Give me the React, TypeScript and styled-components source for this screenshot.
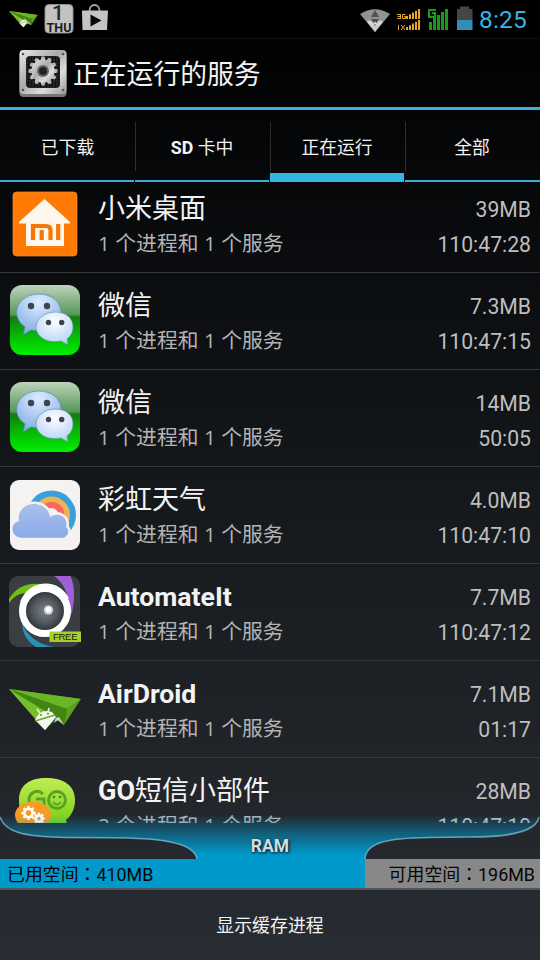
import React from 'react';
import styled, { createGlobalStyle } from 'styled-components';

const GlobalStyle = createGlobalStyle`
  * { box-sizing: border-box; }
  body {
    margin: 0;
    background: #000;
    font-family: Roboto, "Noto Sans CJK SC", sans-serif;
  }
  svg { display: block; flex: none; }
`;

const Screen = styled.div`
  width: 540px;
  height: 960px;
  overflow: hidden;
  display: flex;
  flex-direction: column;
  background: linear-gradient(#000 0%, #050608 15%, #15191c 52%, #22262b 82%, #282c33 100%);
  color: #f3f3f3;
`;

const StatusBar = styled.div`
  height: 39px;
  flex: none;
  display: flex;
  justify-content: space-between;
  background: #000;
  border-bottom: 1px solid #0e0e0e;
`;

const StatusRight = styled.div`
  display: flex;
`;

const Clock = styled.span`
  width: 61px;
  font-size: 24.5px;
  letter-spacing: 0.2px;
  line-height: 40px;
  color: #33b5e5;
  white-space: nowrap;
`;

const Header = styled.header`
  height: 71px;
  flex: none;
  display: flex;
  align-items: center;
  padding: 0 0 0 18px;
  gap: 5px;
  border-bottom: 3px solid #40acd9;
`;

const Title = styled.h1`
  margin: 0;
  font-size: 26.8px;
  font-weight: 400;
  line-height: 40px;
  padding-top: 3px;
`;

const Tabs = styled.nav`
  height: 72px;
  flex: none;
  display: grid;
  grid-template-columns: repeat(4, 135px);
`;

const Tab = styled.div<{ $active?: boolean }>`
  display: flex;
  flex-direction: column;
  align-items: stretch;
  text-align: center;
  font-size: 17.8px;
  &::after {
    content: '';
    margin-right: 1px;
    height: ${(p) => (p.$active ? 9 : 2)}px;
    background: ${(p) => (p.$active ? '#33b5e5' : '#45a8d2')};
  }
  &:last-child::after { margin-right: 0; }
`;

const TabLabel = styled.span<{ $active?: boolean }>`
  height: 49px;
  margin: 12px 0 ${(p) => (p.$active ? 2 : 9)}px;
  line-height: 51px;
  white-space: pre;
  ${Tab} + ${Tab} > & {
    border-left: 1px solid #2c2e30;
    padding-right: 2px;
  }
`;

const Strong = styled.b`
  font-weight: 700;
`;

const List = styled.div`
  height: 641px;
  flex: none;
  overflow: hidden;
`;

const ListBody = styled.div`
  margin-top: -6px;
`;

const Row = styled.div`
  height: 97px;
  display: flex;
  padding: 0 9px 0 9px;
  border-bottom: 1px solid #35383b;
`;

const IconSlot = styled.div`
  width: 72px;
  margin: 12px 17px 0 0;
`;

const Names = styled.div`
  flex: 1;
  display: flex;
  flex-direction: column;
  white-space: pre;
`;

const AppName = styled.div<{ $latin?: boolean }>`
  height: 36px;
  margin-top: 14px;
  font-size: ${(p) => (p.$latin ? 26.6 : 27)}px;
  font-weight: ${(p) => (p.$latin ? 700 : 400)};
  line-height: 38px;
`;

const Detail = styled.div`
  height: 30px;
  margin-top: 2px;
  font-family: "Open Sans", "Noto Sans CJK SC", sans-serif;
  font-size: 20.8px;
  font-weight: 400;
  line-height: 30px;
  color: #b4b4b4;
`;

const Stats = styled.div`
  display: flex;
  flex-direction: column;
  align-items: flex-end;
  padding-top: 16px;
  font-size: 21.2px;
  line-height: 35px;
  color: #bebebe;
`;

const RamPanel = styled.div`
  position: relative;
  z-index: 1;
  height: 67px;
  flex: none;
  display: flex;
  flex-direction: column;
  justify-content: flex-end;
  border-bottom: 2px solid #505458;
`;

const RamShape = styled.svg`
  position: absolute;
  left: 0;
  bottom: 29px;
  z-index: -1;
`;

const RamLabel = styled.div`
  height: 36px;
  line-height: 19px;
  padding-top: 14px;
  text-align: center;
  font-size: 17.5px;
  font-weight: 700;
  color: #d5dadd;
  text-shadow: 1px 1px 3px #000;
`;

const RamBar = styled.div`
  height: 29px;
  display: grid;
  grid-template-columns: 365px 175px;
  grid-template-rows: 29px;
  font-family: Roboto, "Noto Sans CJK TC", sans-serif;
  font-size: 17.9px;
  line-height: 31px;
  color: #050505;
`;

const Used = styled.div`
  background: #0099cc;
  padding-left: 7px;
`;

const Free = styled.div`
  background: #888;
  padding-right: 5px;
  text-align: right;
`;

const FooterButton = styled.div`
  height: 70px;
  text-align: center;
  font-size: 17.9px;
  line-height: 71px;
`;

function PlaneShape() {
  return (
    <>
      <path d="M0 16 72 26 58 37 55 52 47 46 36 57Z" fill="#4d9015" />
      <path d="M0 16 72 26 58 36Z" fill="#6cb626" />
      <path d="M0 16 58 36 55 52Z" fill="#438413" />
      <path d="M58 36 72 26 55 52Z" fill="#5a9f1d" />
      <path d="M0 16 46 44 36 57Z" fill="#74c02a" />
      <path d="M26 47Q31 35 43 39L47 44 36 57Z" fill="#f2f6ef" />
      <path d="m27 47 18-4M28 36l3 4M40 35l-1 4" stroke="#f2f6ef" strokeWidth="1.6" />
      <path d="m26 48 20-6" stroke="#68ae25" strokeWidth="1.4" />
      <circle cx="32" cy="42" r="1" fill="#599e20" />
      <circle cx="39" cy="40.5" r="1" fill="#599e20" />
      <path d="m47 45 3-1 5 8-6-5-4 3Z" fill="#cbd0d9" />
    </>
  );
}

function NotificationIcons() {
  return (
    <svg width="120" height="38">
      <g transform="translate(9 4.500) scale(.4)"><PlaneShape /></g>
      <rect x="45" y="4.500" width="28" height="28.500" rx="4" fill="#c2c2c2" stroke="#8e8e8e" />
      <text x="58" y="20" textAnchor="middle" fontFamily="Roboto" fontSize="21" fontWeight="500" fill="#262626">1</text>
      <text x="59" y="32" textAnchor="middle" fontFamily="Roboto" fontSize="12.500" fontWeight="700" fill="#1a1a1a" textLength="25">THU</text>
      <path d="M82 10.500h26L107 30H82.500Z" fill="#c4c4c4" />
      <path d="M89.500 11c0-8 10-8 10 0" fill="none" stroke="#aaa" strokeWidth="1.800" />
      <path d="m90.500 14.500 11 6-11 6Z" fill="#080808" />
    </svg>
  );
}

function SignalIcons() {
  return (
    <svg width="119" height="38">
      <path d="M0 14Q15 4.500 30 14L15 32Z" fill="#929292" />
      <path d="M7 22q8-4 16 0L15 32Z" fill="#c9c9c9" />
      <path d="m15 10 4 7h-8ZM11 19h8l-4 7Z" fill="#505050" />
      <path d="m8 21 4 4 3-2 3 2 4-4" fill="none" stroke="#d5d5d5" strokeWidth="2" />
      <g fill="none" stroke="#e9a528" strokeWidth="1">
        <path d="M37 14.500h3.500v4H38h2.500M37 18.500h3.500M40.500 14v4.500M37.500 16.500h3M45.500 14.500H42.500v4h3v-2h-1.500M38.500 25v5M41 25l4 5M45 25l-4 5" />
      </g>
      <g fill="#e9a528">
        {[0, 1, 2, 3, 4].map((i) => (
          <React.Fragment key={i}>
            <rect x={46 + i * 3} y={16 - i * 1.75} width="2" height={3 + i * 1.75} />
            <rect x={46 + i * 3} y={27 - i * 1.75} width="2" height={3 + i * 1.75} />
          </React.Fragment>
        ))}
      </g>
      <g fill="#179b1b">
        {[0, 1, 2, 3, 4].map((i) => (
          <rect key={i} x={69 + i * 4} y={[22, 18, 15, 12, 9][i]} width="3" height={[8, 12, 15, 18, 21][i]} />
        ))}
        <path d="M68 9h8v2h-6v5h4v-2h-2v-2h4v6h-8Z" />
      </g>
      <path d="M97 9h3V6.500h9V9h3.500v11H97Z" fill="#464646" />
      <rect x="97" y="20" width="15.500" height="10" fill="#338eb6" />
    </svg>
  );
}

const GEAR_TEETH = Array.from({ length: 12 }, (_, i) => i * 30);

function SettingsIcon() {
  return (
    <svg width="50" height="50">
      <defs>
        <linearGradient id="metal" x1="0" y1="0" x2="1" y2="1">
          <stop stopColor="#e8e8e8" /><stop offset=".45" stopColor="#aaa" /><stop offset=".7" stopColor="#ddd" /><stop offset="1" stopColor="#9a9a9a" />
        </linearGradient>
        <pattern id="mesh" width="3" height="3" patternUnits="userSpaceOnUse">
          <rect width="3" height="3" fill="#262626" /><circle cx="1.500" cy="1.500" r=".9" fill="#050505" />
        </pattern>
      </defs>
      <rect x="1.500" y="3" width="47" height="46" rx="4" fill="#777" />
      <rect x="1.500" y="2" width="47" height="44" rx="4" fill="url(#metal)" />
      <rect x="8" y="8" width="34" height="32" rx="4" fill="url(#mesh)" />
      {[5, 45].map((x) => [6, 42].map((y) => <circle key={`${x}-${y}`} cx={x} cy={y} r="1.300" fill="#555" />))}
      <g fill="url(#metal)">
        {GEAR_TEETH.map((a) => <path key={a} d="m22.500 13 1-4.500h3l1 4.500Z" transform={`rotate(${a} 25 23)`} />)}
        <circle cx="25" cy="23" r="11.500" />
      </g>
      <circle cx="25" cy="23" r="6" fill="#666" />
      <circle cx="25" cy="23" r="4" fill="#222" />
    </svg>
  );
}

function MiIcon() {
  return (
    <svg width="72" height="72">
      <rect x="4" y="4" width="64" height="64" rx="3.500" fill="#ff7a05" stroke="#f09040" strokeWidth=".7" />
      <path d="M35.500 11 61 34v1.500h-6V58H17V35.500h-7V34Z" fill="#fff6ec" />
      <g fill="none" stroke="#f57708" strokeWidth="4.200">
        <path d="M24 52V38h13q4.500 0 4.500 4V52M32.700 42v10M49.200 36V52" />
      </g>
    </svg>
  );
}

function WeChatIcon() {
  return (
    <svg width="72" height="72">
      <defs>
        <linearGradient id="wg" x1="0" y1="0" x2="0" y2="1">
          <stop stopColor="#bcd4bc" /><stop offset=".42" stopColor="#589758" /><stop offset=".46" stopColor="#147b14" /><stop offset=".7" stopColor="#06b506" /><stop offset="1" stopColor="#00f000" />
        </linearGradient>
        <radialGradient id="b1" cx=".5" cy=".2" r=".8"><stop stopColor="#dcecff" /><stop offset="1" stopColor="#83ace3" /></radialGradient>
        <radialGradient id="b2" cx=".5" cy=".3" r=".8"><stop stopColor="#fff" /><stop offset="1" stopColor="#abcbf7" /></radialGradient>
      </defs>
      <rect x="1" y="0" width="70" height="70" rx="12" fill="url(#wg)" />
      <path d="M30 9c13 0 22 8 22 18S43 46 29 46l-7-1-8 5 2-8C0 31 8 9 30 9Z" fill="url(#b1)" stroke="#4d8ab0" strokeWidth=".7" />
      <path d="M46 27c11 0 18 6 18 15 0 5-2 9-6 12l1 6-7-4C37 59 27 51 27 42c0-8 8-15 19-15Z" fill="url(#b2)" stroke="#6495a8" strokeWidth=".7" />
      <g fill="#3c454f"><circle cx="22" cy="21" r="3.200" /><circle cx="38" cy="21" r="3.200" /><circle cx="39.500" cy="37.500" r="2.700" /><circle cx="52.700" cy="37.500" r="2.700" /></g>
    </svg>
  );
}

function RainbowIcon() {
  const cloud = 'M12 58.700C2 58 0 45 10 42 8 31 17 25 25 25 33 25 40 30 41 38 50 32 60 39 57 48 62 52 58 58.700 53 58.700Z';
  return (
    <svg width="72" height="72">
      <defs><linearGradient id="cloud" x1="0" y1="0" x2="0" y2="1"><stop stopColor="#a9c0ee" /><stop offset="1" stopColor="#8aabe7" /></linearGradient></defs>
      <rect x="1" y="1" width="70" height="70" rx="9" fill="#f4f3f1" />
      <circle cx="42.500" cy="36" r="24.500" fill="#37a0df" />
      <circle cx="42.500" cy="36" r="18.500" fill="#edb455" />
      <circle cx="42.500" cy="36" r="13" fill="#fa655f" />
      <circle cx="42.500" cy="36" r="7" fill="#f4f3f1" />
      <path d="M12 50H58V68H12Z" fill="#f4f3f1" />
      <path d={cloud} fill="#f4f3f1" stroke="#f4f3f1" strokeWidth="5" />
      <path d={cloud} fill="url(#cloud)" />
    </svg>
  );
}

function AutomateIcon() {
  return (
    <svg width="74" height="72">
      <defs><clipPath id="tile"><rect y="0" width="71" height="71" rx="9" /></clipPath><radialGradient id="lens"><stop stopColor="#788087" /><stop offset=".5" stopColor="#555b62" /><stop offset="1" stopColor="#24282b" /></radialGradient></defs>
      <g clipPath="url(#tile)">
        <rect width="72" height="72" fill="#3a3d41" />
        <path d="M-2 27Q8 5 32 8L18 17Q5 17-2 30Z" fill="#72bd16" />
        <path d="M44-1h17q7 14 2 38l-4 3Q63 13 44-1Z" fill="#9f60d6" />
        <path d="M13 47q8 20 32 24l-10 3Q14 68 13 47Z" fill="#2692b8" />
        <circle cx="36" cy="35" r="22.500" fill="url(#lens)" stroke="#fff" strokeWidth="7" />
        <path d="M12 26Q20 8.500 37 8.500q14 0 22 14" fill="none" stroke="#fff" strokeWidth="2" />
        <circle cx="39.500" cy="34" r="4.500" fill="#ddd" /><circle cx="39.500" cy="33.500" r="2.500" fill="#fff" />
      </g>
      <rect x="40.500" y="55.500" width="31.500" height="10.500" fill="#a8ce2b" />
      <text x="44" y="64.300" fontSize="9.500" fontFamily="Liberation Sans" fill="#17200a" textLength="24.500">FREE</text>
    </svg>
  );
}

function AirDroidIcon() {
  return <svg width="74" height="72"><PlaneShape /></svg>;
}

function Cog({ x, y, r }: { x: number; y: number; r: number }) {
  return (
    <g transform={`translate(${x} ${y})`}>
      <circle r={r} fill="none" stroke="#fff" strokeWidth="2.600" />
      {[0, 45, 90, 135, 180, 225, 270, 315].map((a) => <rect key={a} x="-1.200" y={-r - 2.8} width="2.400" height="2.500" fill="#fff" transform={`rotate(${a})`} />)}
    </g>
  );
}

function GoIcon() {
  return (
    <svg width="72" height="72">
      <defs><linearGradient id="go" x1="0" y1="0" x2="0" y2="1"><stop stopColor="#c0ed55" /><stop offset=".8" stopColor="#82d21d" /></linearGradient></defs>
      <path d="M37 8C54 8 66 15 66 30c0 8-3 15-9 20l2 8H27C14 53 10 46 10 30 10 15 21 8 37 8Z" fill="url(#go)" />
      <g fill="none" stroke="#5ba31e" strokeWidth="3">
        <path d="M34 24c-6-6-14-1-14 6s8 12 15 6v-7h-8" />
        <circle cx="48" cy="30" r="8.500" />
        <path d="M44 32q4 5 8 0" strokeWidth="1.800" />
      </g>
      <circle cx="45" cy="27" r="1.300" fill="#388611" /><circle cx="51" cy="27" r="1.300" fill="#388611" />
      <ellipse cx="24" cy="45.500" rx="18" ry="14" fill="#f99a25" />
      <Cog x={19.5} y={43} r={4.2} /><Cog x={30} y={48.5} r={3} />
    </svg>
  );
}

type Service = { icon: React.ReactNode; name: React.ReactNode; latin?: boolean; detail: string; size: string; time: string };

const ONE = '1 个进程和 1 个服务';
const SERVICES: Service[] = [
  { icon: <MiIcon />, name: '小米桌面', detail: ONE, size: '39MB', time: '110:47:28' },
  { icon: <WeChatIcon />, name: '微信', detail: ONE, size: '7.3MB', time: '110:47:15' },
  { icon: <WeChatIcon />, name: '微信', detail: ONE, size: '14MB', time: '50:05' },
  { icon: <RainbowIcon />, name: '彩虹天气', detail: ONE, size: '4.0MB', time: '110:47:10' },
  { icon: <AutomateIcon />, name: 'AutomateIt', latin: true, detail: ONE, size: '7.7MB', time: '110:47:12' },
  { icon: <AirDroidIcon />, name: 'AirDroid', latin: true, detail: ONE, size: '7.1MB', time: '01:17' },
  { icon: <GoIcon />, name: <><Strong>GO</Strong>短信小部件</>, detail: '2 个进程和 1 个服务', size: '28MB', time: '110:47:10' },
];

export default function App() {
  return (
    <>
      <GlobalStyle />
      <Screen>
        <StatusBar>
          <NotificationIcons />
          <StatusRight>
            <SignalIcons />
            <Clock>8:25</Clock>
          </StatusRight>
        </StatusBar>
        <Header>
          <SettingsIcon />
          <Title>正在运行的服务</Title>
        </Header>
        <Tabs>
          <Tab><TabLabel>已下载</TabLabel></Tab>
          <Tab><TabLabel><Strong>SD</Strong> 卡中</TabLabel></Tab>
          <Tab $active><TabLabel $active>正在运行</TabLabel></Tab>
          <Tab><TabLabel>全部</TabLabel></Tab>
        </Tabs>
        <List>
          <ListBody>
            {SERVICES.map((s, i) => (
              <Row key={i}>
                <IconSlot>{s.icon}</IconSlot>
                <Names>
                  <AppName $latin={s.latin}>{s.name}</AppName>
                  <Detail>{s.detail}</Detail>
                </Names>
                <Stats>
                  <span>{s.size}</span>
                  <span>{s.time}</span>
                </Stats>
              </Row>
            ))}
          </ListBody>
        </List>
        <RamPanel>
          <RamShape width="540" height="44">
            <defs>
              <linearGradient id="ram" x1="0" y1="0" x2="0" y2="1">
                <stop stopColor="#0099cc" stopOpacity="0" />
                <stop offset=".3" stopColor="#0099cc" stopOpacity=".36" />
                <stop offset=".9" stopColor="#0099cc" />
              </linearGradient>
            </defs>
            <path d="M0 0C5 16 20 22 67 22.500L110 22.800C155 23 194 26 197 44H365C366 28 385 23 430 22.500L470 22C510 22 536 17 539 0Z" fill="url(#ram)" />
            <path d="M0 2C5 16 20 22 67 22.500L110 22.800C155 23 194 26 197 44M365 44C366 28 385 23 430 22.500L470 22C510 22 536 17 539 2" fill="none" stroke="#8cc5dc" strokeOpacity=".7" strokeWidth="1.500" />
          </RamShape>
          <RamLabel>RAM</RamLabel>
          <RamBar>
            <Used>已用空间：410MB</Used>
            <Free>可用空间：196MB</Free>
          </RamBar>
        </RamPanel>
        <FooterButton>显示缓存进程</FooterButton>
      </Screen>
    </>
  );
}
